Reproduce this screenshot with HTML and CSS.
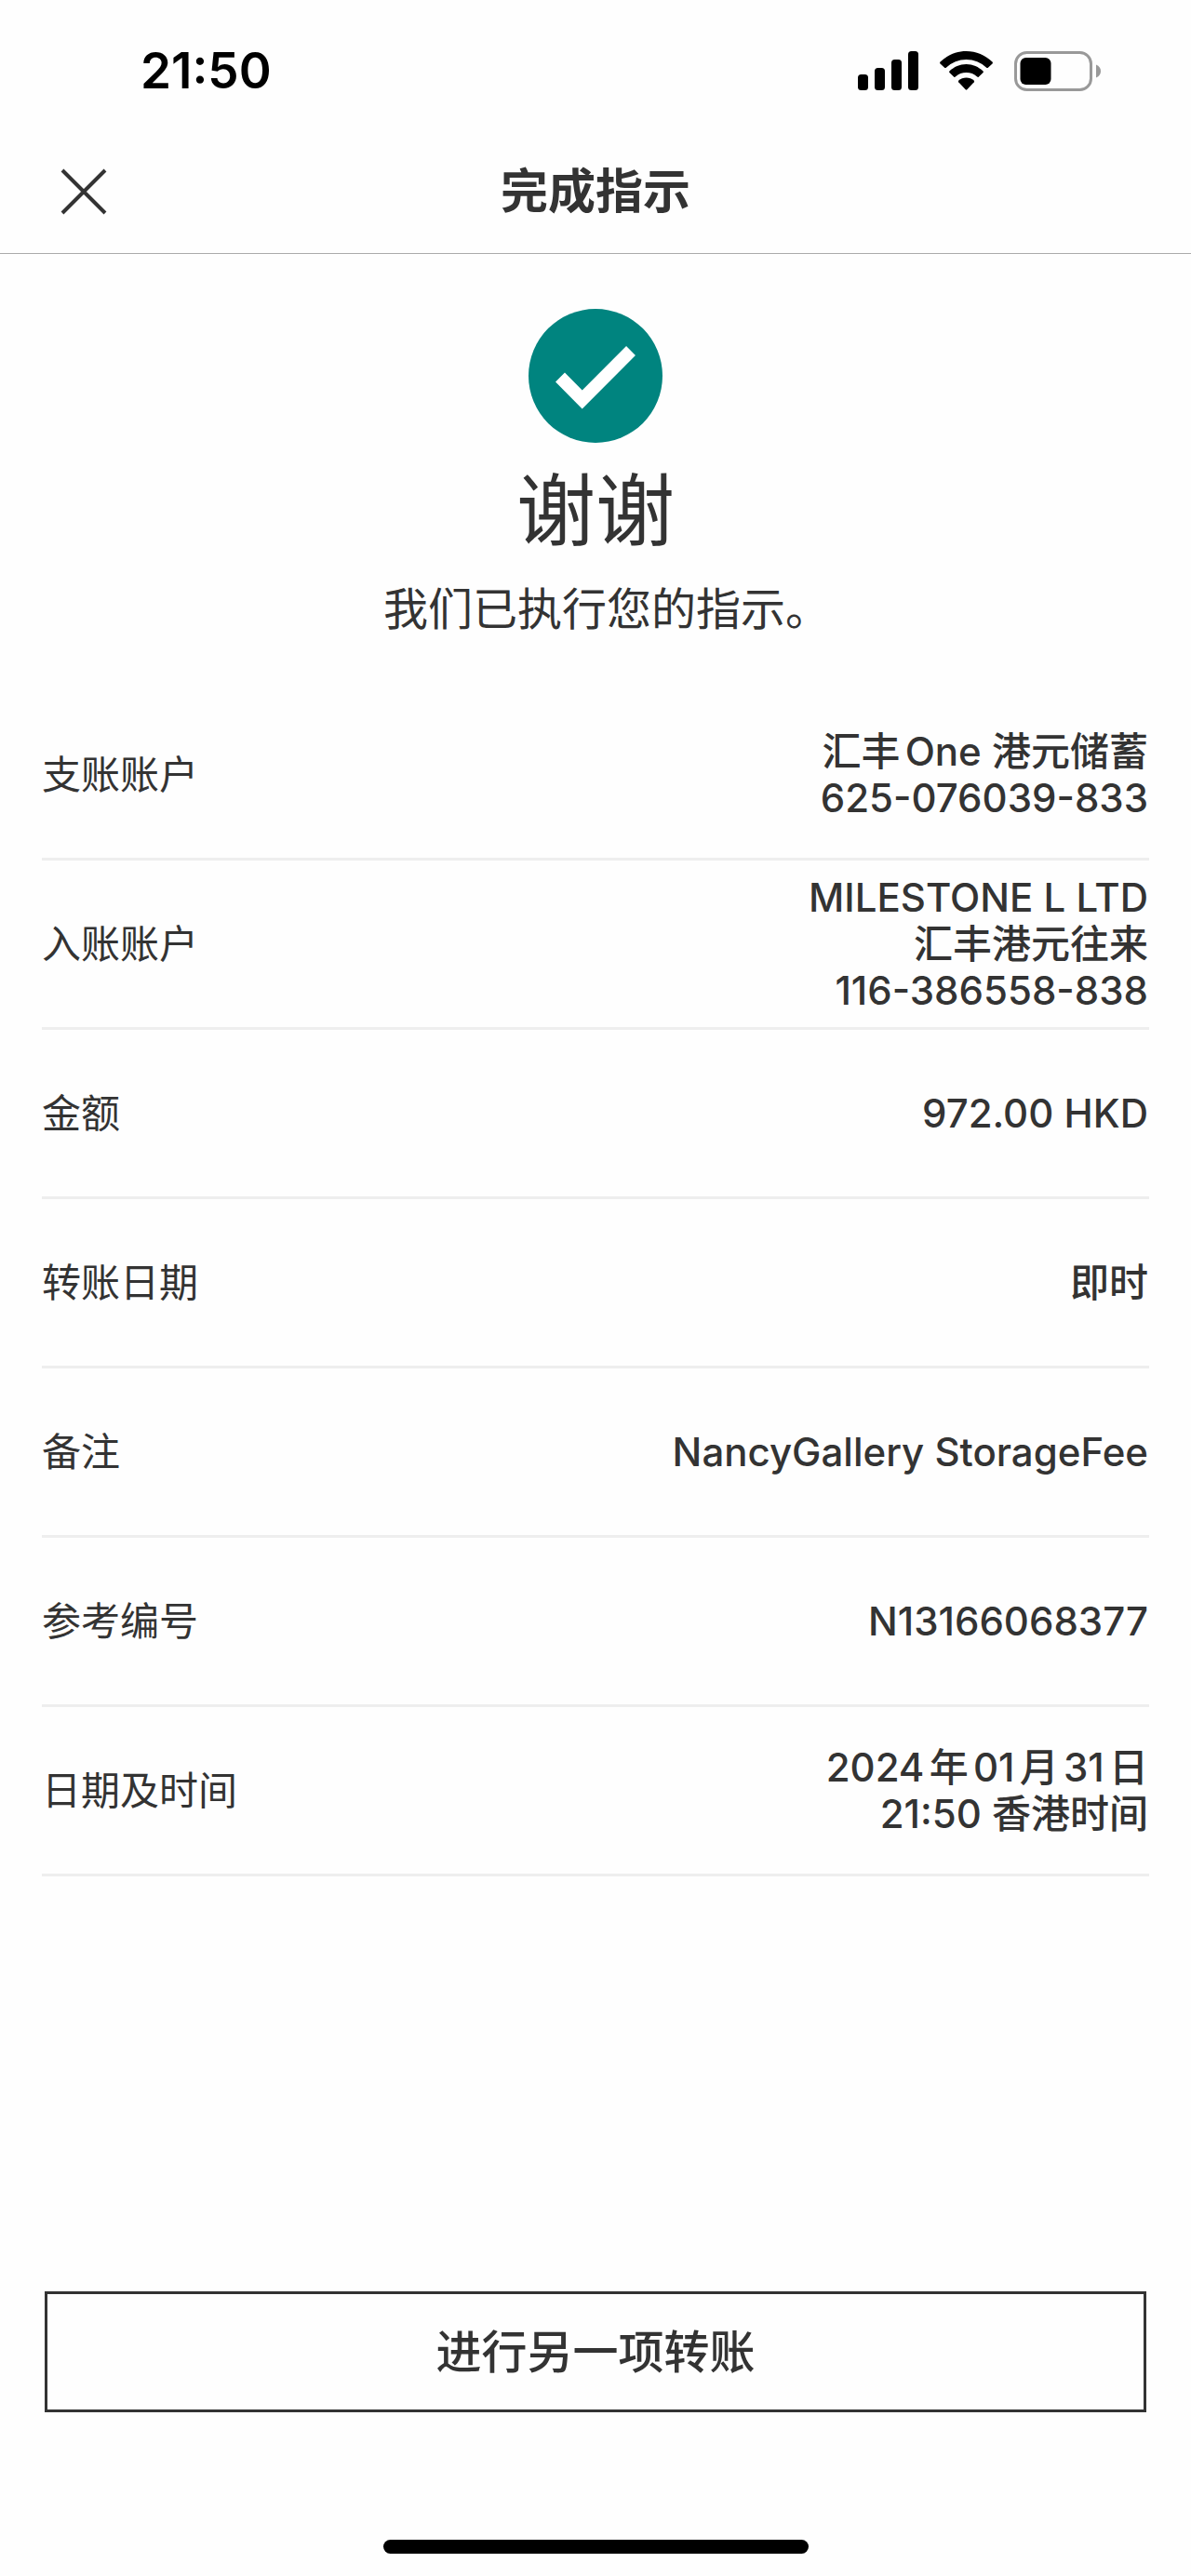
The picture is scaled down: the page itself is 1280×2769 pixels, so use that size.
FILE: index.html
```html
<!DOCTYPE html>
<html lang="zh-CN">
<head>
    <meta charset="UTF-8">
    <meta name="viewport" content="width=device-width, initial-scale=1.0">
    <title>完成指示</title>
    <link rel="stylesheet" href="styles.css">
</head>
<body>
    <div class="status-bar">
        <span class="time">21:50</span>
        <div class="status-icons">
            <svg width="65" height="42" viewBox="0 0 65 42">
                <rect x="0" y="25" width="11" height="17" rx="3.5"/>
                <rect x="18" y="18" width="11" height="24" rx="3.5"/>
                <rect x="36" y="9" width="11" height="33" rx="3.5"/>
                <rect x="54" y="0" width="11" height="42" rx="3.5"/>
            </svg>
            <svg width="57" height="42" viewBox="0 0 57 42">
                <path d="M28.5 0C39 0 49 4.300 56.500 11.500Q57.300 12.500 56.500 13.400L51.600 18Q50.900 18.300 50.200 17.700A31.500 31.500 0 0 0 6.800 17.700Q6.100 18.300 5.400 18L0.500 13.400Q-0.300 12.500 0.500 11.500C8 4.300 18 0 28.500 0Z"/>
                <path d="M28.500 14C35.500 14 41.800 16.900 46.600 21.500Q47.300 22.300 46.600 23.100L41.700 27.800Q41 28.300 40.200 27.600A17.500 17.500 0 0 0 16.800 27.600Q16 28.300 15.300 27.800L10.400 23.100Q9.700 22.300 10.400 21.500C15.200 16.900 21.500 14 28.500 14Z"/>
                <path d="M28.500 28.500C31.700 28.500 34.500 29.700 36.700 31.600Q37.500 32.400 36.800 33.200L29.300 41.300Q28.500 42 27.700 41.300L20.200 33.200Q19.500 32.400 20.300 31.600C22.500 29.700 25.300 28.500 28.500 28.500Z"/>
            </svg>
            <svg width="93" height="43" viewBox="0 0 93 43">
                <rect x="1.500" y="1.500" width="81" height="40" rx="12" fill="none" stroke="#999" stroke-width="3"/>
                <rect x="6.500" y="7" width="33" height="29" rx="6"/>
                <path d="M88 14.500C91.500 16 93 18.500 93 21.500S91.500 27 88 28.500Z" fill="#999"/>
            </svg>
        </div>
    </div>

    <header class="header">
        <button class="close" type="button" aria-label="关闭">
            <svg width="50" height="50" viewBox="0 0 50 50">
                <path d="M2 2L48 48M48 2L2 48" fill="none" stroke="#333" stroke-width="4"/>
            </svg>
        </button>
        <h1>完成指示</h1>
    </header>

    <main class="content">
        <section class="result">
            <svg width="144" height="144" viewBox="0 0 144 144">
                <circle cx="72" cy="72" r="72" fill="#00847f"/>
                <path d="M34 73.500L57.700 97.500L110 45" fill="none" stroke="#fff" stroke-width="14"/>
            </svg>
            <h2>谢谢</h2>
            <p>我们已执行您的指示。</p>
        </section>

        <dl class="details">
            <div class="row">
                <dt>支账账户</dt>
                <dd>汇丰One 港元储蓄<br>625-076039-833</dd>
            </div>
            <div class="row">
                <dt>入账账户</dt>
                <dd>MILESTONE L LTD<br>汇丰港元往来<br>116-386558-838</dd>
            </div>
            <div class="row">
                <dt>金额</dt>
                <dd>972.00 HKD</dd>
            </div>
            <div class="row">
                <dt>转账日期</dt>
                <dd>即时</dd>
            </div>
            <div class="row">
                <dt>备注</dt>
                <dd>NancyGallery StorageFee</dd>
            </div>
            <div class="row">
                <dt>参考编号</dt>
                <dd>N13166068377</dd>
            </div>
            <div class="row">
                <dt>日期及时间</dt>
                <dd>2024年01月31日<br>21:50 香港时间</dd>
            </div>
        </dl>
    </main>

    <footer class="footer">
        <button class="again" type="button">进行另一项转账</button>
        <div class="home-indicator"></div>
    </footer>
</body>
</html>
```

FILE: styles.css
```css
* {
    box-sizing: border-box;
    margin: 0;
    padding: 0;
}
body {
    display: flex;
    flex-direction: column;
    min-height: 100vh;
    font-family: Inter, "Noto Sans CJK SC", sans-serif;
    background-color: #fefefe;
    color: #333;
}
svg {
    display: block;
}
button {
    font-family: inherit;
    color: inherit;
    background: none;
    cursor: pointer;
}

/* Phone status bar */
.status-bar {
    display: flex;
    justify-content: space-between;
    align-items: center;
    height: 152px;
    padding: 0 97px 0 151px;
    color: #000;
}
.time {
    font-size: 53px;
    font-weight: 600;
}
.status-icons {
    display: flex;
    align-items: center;
    gap: 23px;
}

/* Title bar */
.header {
    display: grid;
    grid-template-columns: 1fr auto 1fr;
    align-items: center;
    height: 121px;
    padding: 0 65px 12px;
    border-bottom: 1px solid #aaa;
}
.close {
    justify-self: start;
    border: none;
}
.header h1 {
    font-size: 51px;
    font-weight: 700;
    line-height: 60px;
}

/* Result message */
.content {
    flex: 1;
    padding: 59px 45px;
}
.result {
    display: flex;
    flex-direction: column;
    align-items: center;
    margin-bottom: 56px;
}
.result h2 {
    margin-top: 16px;
    font-size: 85px;
    font-weight: 400;
    line-height: 116px;
}
.result p {
    margin-top: 15px;
    font-size: 48px;
    line-height: 64px;
    font-feature-settings: "halt"; /* half-width full stop */
}

/* Transfer details */
.row {
    display: flex;
    justify-content: space-between;
    align-items: center;
    height: 182px;
    border-bottom: 3px solid #eee;
    font-size: 42px;
    line-height: 50px;
}
.row dd {
    padding-right: 1px;
    font-weight: 500;
    text-align: right;
    text-autospace: normal;
}

/* Bottom action */
.footer {
    display: flex;
    flex-direction: column;
    align-items: center;
    padding: 0 48px 24px;
}
.again {
    width: 100%;
    height: 130px;
    padding-bottom: 8px;
    border: 3px solid #333;
    font-size: 49px;
    font-weight: 500;
}
.home-indicator {
    width: 457px;
    height: 15px;
    margin-top: 137px;
    border-radius: 8px;
    background: #000;
}
```
